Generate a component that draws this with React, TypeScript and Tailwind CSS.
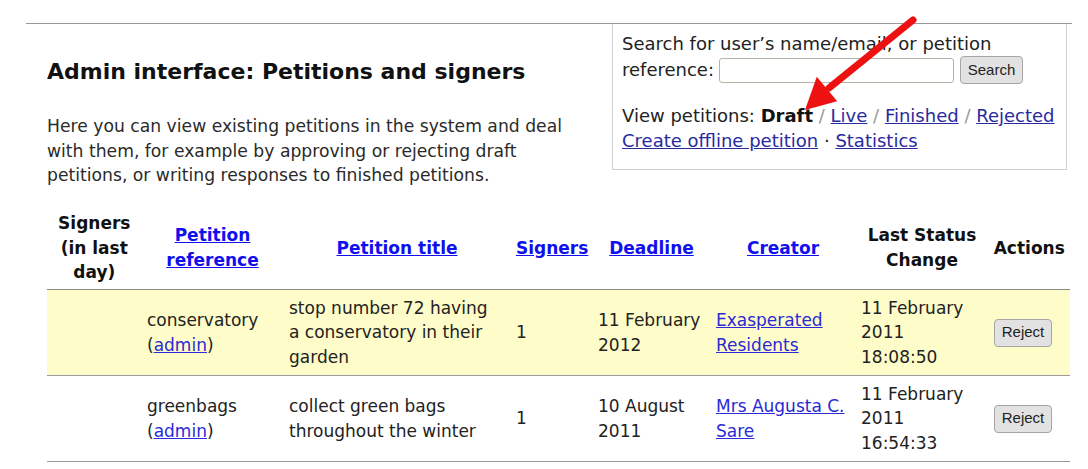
import { FC } from 'react'

const cell = 'px-[5.5px] py-[5.75px] align-middle'
const headLink = 'text-[#1010ee] underline'
const dataLink = 'text-[#2a2ad6] underline'
const boxLink = 'text-[#2a2aa0] underline'

const RejectButton: FC = () => (
  <button
    type="button"
    className="h-[28px] w-[58px] rounded-[4px] border border-[#a6a6a6] bg-[#e2e2e2] font-['Liberation_Sans',Arial,sans-serif] text-[15px] text-[#222]"
  >
    Reject
  </button>
)

const App: FC = () => {
  return (
    <div className="relative min-h-[469px] bg-white font-['DejaVu_Sans',sans-serif] text-[17px] text-[#222]">
      <div className="pl-[26px] pr-[16px] pt-[23px]">
        <div className="border-t border-[#9a9a9a]">
          <div className="flex items-start">
            {/* heading + intro */}
            <div className="flex-1 pl-[21px] pr-[20px] pt-[34px]">
              <h1 className="text-[22px] font-bold leading-[28px] text-[#111]">
                Admin interface: Petitions and signers
              </h1>
              <p className="mt-[28px] text-[17.2px] leading-[24.5px] text-[#2a2a2a]">
                Here you can view existing petitions in the system and deal with them, for example by
                approving or rejecting draft petitions, or writing responses to finished petitions.
              </p>
            </div>

            {/* search / view box */}
            <div className="mr-[5px] w-[455px] shrink-0 border-x border-b border-[#d0d0d0] pb-[16px] pl-[9px] pr-[8px] pt-[8px] text-[18px] text-[#222]">
              <div className="leading-[24px]">Search for user’s name/email, or petition</div>
              <div className="flex items-center">
                <span className="leading-[24px]">reference:</span>
                <input
                  type="text"
                  className="ml-[5px] h-[25px] w-[235px] rounded-[3px] border border-[#b4b4a4] bg-white"
                />
                <button
                  type="button"
                  className="ml-[6px] h-[28px] w-[63px] rounded-[4px] border border-[#a6a6a6] bg-[#e2e2e2] font-['Liberation_Sans',Arial,sans-serif] text-[15px] text-[#222]"
                >
                  Search
                </button>
              </div>
              <div className="mt-[19px] leading-[25px]">
                View petitions: <b className="text-[#111]">Draft</b>{' '}
                <span className="text-[#999]">/</span> <a className={boxLink}>Live</a>{' '}
                <span className="text-[#999]">/</span> <a className={boxLink}>Finished</a>{' '}
                <span className="text-[#999]">/</span> <a className={boxLink}>Rejected</a>
                <br />
                <a className={boxLink}>Create offline petition</a> · <a className={boxLink}>Statistics</a>
              </div>
            </div>
          </div>

          {/* petitions table */}
          <table className="ml-[21px] mt-[19px] w-[1023px] table-fixed border-collapse leading-[24.5px]">
            <colgroup>
              <col className="w-[94.5px]" />
              <col className="w-[142px]" />
              <col className="w-[227px]" />
              <col className="w-[82px]" />
              <col className="w-[118px]" />
              <col className="w-[145px]" />
              <col className="w-[133px]" />
              <col className="w-[81.5px]" />
            </colgroup>
            <thead>
              <tr className="border-b border-[#8c8c8c] text-center font-bold text-[#111]">
                <th className="px-[5.5px] py-[4.5px] align-middle">
                  Signers
                  <br />
                  (in last
                  <br />
                  day)
                </th>
                <th className="px-[5.5px] py-[4.5px] align-middle">
                  <a className={headLink}>
                    Petition
                    <br />
                    reference
                  </a>
                </th>
                <th className="px-[5.5px] py-[4.5px] align-middle">
                  <a className={headLink}>Petition title</a>
                </th>
                <th className="px-[5.5px] py-[4.5px] align-middle">
                  <a className={headLink}>Signers</a>
                </th>
                <th className="px-[5.5px] py-[4.5px] align-middle">
                  <a className={headLink}>Deadline</a>
                </th>
                <th className="px-[5.5px] py-[4.5px] align-middle">
                  <a className={headLink}>Creator</a>
                </th>
                <th className="px-[5.5px] py-[4.5px] align-middle">
                  Last Status
                  <br />
                  Change
                </th>
                <th className="px-[2px] py-[4.5px] align-middle">Actions</th>
              </tr>
            </thead>
            <tbody>
              <tr className="border-b border-[#9a9a9a] bg-[#fefcc9]">
                <td className={cell}></td>
                <td className={cell}>
                  conservatory
                  <br />(<a className={dataLink}>admin</a>)
                </td>
                <td className={cell}>
                  stop number 72 having
                  <br />
                  a conservatory in their
                  <br />
                  garden
                </td>
                <td className={cell}>1</td>
                <td className={cell}>
                  11 February
                  <br />
                  2012
                </td>
                <td className={cell}>
                  <a className={dataLink}>
                    Exasperated
                    <br />
                    Residents
                  </a>
                </td>
                <td className={cell}>
                  11 February
                  <br />
                  2011
                  <br />
                  18:08:50
                </td>
                <td className={cell}>
                  <RejectButton />
                </td>
              </tr>
              <tr className="border-b border-[#9a9a9a]">
                <td className={cell}></td>
                <td className={cell}>
                  greenbags
                  <br />(<a className={dataLink}>admin</a>)
                </td>
                <td className={cell}>
                  collect green bags
                  <br />
                  throughout the winter
                </td>
                <td className={cell}>1</td>
                <td className={cell}>
                  10 August
                  <br />
                  2011
                </td>
                <td className={cell}>
                  <a className={dataLink}>
                    Mrs Augusta C.
                    <br />
                    Sare
                  </a>
                </td>
                <td className={cell}>
                  11 February
                  <br />
                  2011
                  <br />
                  16:54:33
                </td>
                <td className={cell}>
                  <RejectButton />
                </td>
              </tr>
            </tbody>
          </table>
        </div>
      </div>

      {/* red annotation arrow */}
      <svg
        className="pointer-events-none absolute left-0 top-0"
        width="1088"
        height="469"
        viewBox="0 0 1088 469"
      >
        <line x1="913" y1="20" x2="829" y2="88" stroke="#ee1111" strokeWidth="7" strokeLinecap="round" />
        <polygon points="805,110 816.8,76.7 837.2,101.3" fill="#ee1111" />
      </svg>
    </div>
  )
}

export default App
